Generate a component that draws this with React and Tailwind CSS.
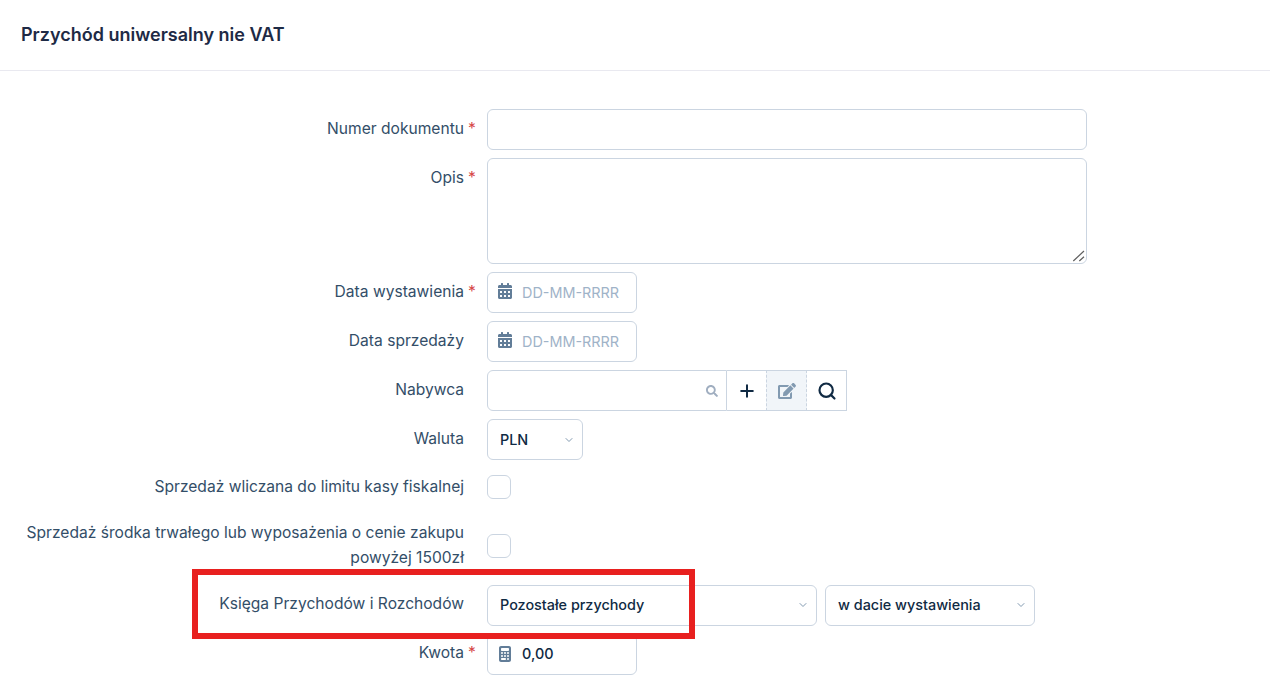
import React from "react";
import { FaCalendarAlt, FaEdit, FaSearch } from "react-icons/fa";
import { FaCalculator } from "react-icons/fa6";
import { Plus, Search, ChevronDown } from "lucide-react";

function Label({ children, required, cls = "" }) {
  return (
    <label className={"w-[476px] shrink-0 pr-[1px] flex justify-end text-[15.6px] leading-[24.5px] text-[#334e68] text-right " + cls}>
      <span className="w-[445px]">{children}</span>
      <span className={"w-[7px] ml-[4px] text-left shrink-0 " + (required ? "text-[#d64545]" : "")}>{required ? "*" : ""}</span>
    </label>
  );
}

function Row({ label, required, children, labelCls = "pt-[8px]" }) {
  return (
    <div className="flex gap-[11px] items-start">
      <Label required={required} cls={labelCls}>{label}</Label>
      {children}
    </div>
  );
}

function IconInput({ icon, placeholder, value, cls = "" }) {
  return (
    <div className={"w-[150px] h-[41px] rounded-md border border-[#cbd5e1] flex items-center pl-[9px] pr-2 gap-[9px] bg-white " + cls}>
      <span className="flex text-[#627d98] shrink-0">{icon}</span>
      <input readOnly value={value} placeholder={placeholder} className="w-full min-w-0 text-[14.4px] font-medium text-[#102a43] outline-none placeholder:text-[#9fb3c8] placeholder:font-normal" />
    </div>
  );
}

function Select({ value, w, cls = "" }) {
  return (
    <div className={"h-[41px] rounded-md border border-[#cbd5e1] flex items-center justify-between pl-3 pr-[7px] bg-white " + w + " " + cls}>
      <span className="text-[14.4px] font-medium text-[#102a43]">{value}</span>
      <ChevronDown size={12} strokeWidth={2} className="text-[#829ab1]" />
    </div>
  );
}

function Check({ cls = "" }) {
  return <div className={"w-[24px] h-[24px] rounded-md border border-[#cbd5e1] bg-white " + cls} />;
}

export default function App() {
  return (
    <div className="relative h-[693px] overflow-hidden bg-white font-['Inter',sans-serif]">
      <header className="h-[71px] border-b border-[#e9e9f0] flex items-center pl-[21px] pb-[1px]">
        <h1 className="text-[18px] font-semibold text-[#1e2a45]">Przychód uniwersalny nie VAT</h1>
      </header>
      <form className="pt-[38px] flex flex-col gap-2">
        <Row label="Numer dokumentu" required>
          <input className="w-[600px] h-[41px] rounded-md border border-[#cbd5e1] outline-none" />
        </Row>
        <Row label="Opis" required>
          <div className="relative w-[600px] h-[106px]">
            <textarea className="w-full h-full rounded-md border border-[#cbd5e1] outline-none block resize-none" />
            <svg className="absolute right-[2px] bottom-[2px]" width="14" height="14" viewBox="0 0 14 14" fill="none" stroke="#5f5f5f" strokeWidth="1.2">
              <path d="M2.3 13L13 3M8.3 13L13 8.7" />
            </svg>
          </div>
        </Row>
        <Row label="Data wystawienia" required>
          <IconInput icon={<FaCalendarAlt size={16} className="mb-[3px]" />} placeholder="DD-MM-RRRR" value="" />
        </Row>
        <Row label="Data sprzedaży">
          <IconInput icon={<FaCalendarAlt size={16} className="mb-[3px]" />} placeholder="DD-MM-RRRR" value="" />
        </Row>
        <Row label="Nabywca">
          <div className="flex h-[41px] w-[360px]">
            <div className="w-[240px] rounded-l-md border border-[#cbd5e1] flex items-center justify-end pr-[8px]">
              <FaSearch size={12} className="text-[#a0aec0]" />
            </div>
            <div className="w-[39px] border-y border-[#cbd5e1] flex items-center justify-center text-[#102a43]">
              <Plus size={20} strokeWidth={2.4} />
            </div>
            <div className="w-[41px] border border-[#cbd5e1] [border-left-style:dashed] [border-right-style:dashed] bg-[#f1f5f9] flex items-center justify-center text-[#829ab1]">
              <FaEdit size={18} />
            </div>
            <div className="w-[40px] border-y border-r border-[#cbd5e1] flex items-center justify-center text-[#102a43]">
              <Search size={20} strokeWidth={2.6} />
            </div>
          </div>
        </Row>
        <Row label="Waluta">
          <Select value="PLN" w="w-[96px]" />
        </Row>
        <div className="h-[41px]">
          <Row label="Sprzedaż wliczana do limitu kasy fiskalnej" labelCls="pt-[7px]">
            <Check cls="mt-[7px]" />
          </Row>
        </div>
        <div className="h-[60px]">
          <Row label="Sprzedaż środka trwałego lub wyposażenia o cenie zakupu powyżej 1500zł" labelCls="pt-[4px]">
            <Check cls="mt-[17px]" />
          </Row>
        </div>
        <Row label="Księga Przychodów i Rozchodów" labelCls="pt-[7px]">
          <div className="flex gap-2">
            <Select value="Pozostałe przychody" w="w-[330px]" cls="pb-[2px]" />
            <Select value="w dacie wystawienia" w="w-[210px]" cls="pb-[2px]" />
          </div>
        </Row>
        <Row label="Kwota" required labelCls="pt-[7px]">
          <IconInput icon={<FaCalculator size={16} />} value="0,00" cls="pb-[2px]" />
        </Row>
      </form>
      <div className="absolute left-[192px] top-[569px] w-[503px] h-[70px] border-[6px] border-[#e8201f] pointer-events-none" />
    </div>
  );
}
